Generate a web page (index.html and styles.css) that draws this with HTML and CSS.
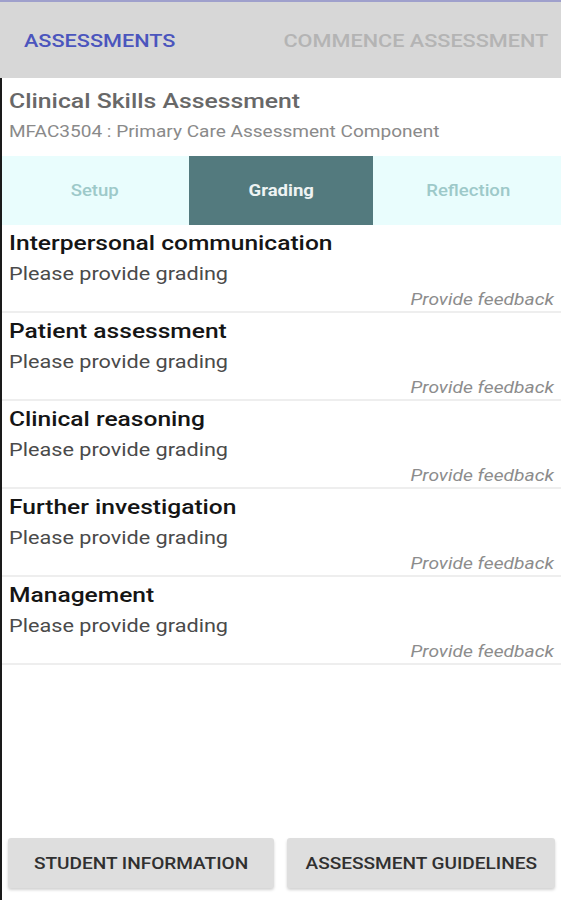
FILE: index.html
```html
<!DOCTYPE html>
<html lang="en">
<head>
    <meta charset="UTF-8">
    <meta name="viewport" content="width=device-width, initial-scale=1.0">
    <title>Clinical Skills Assessment</title>
    <link rel="stylesheet" href="styles.css">
</head>
<body>
    <div class="app">
        <header class="topbar">
            <span class="nav-link active">ASSESSMENTS</span>
            <span class="nav-link right">COMMENCE ASSESSMENT</span>
        </header>

        <main class="content">
            <div class="assessment-head">
                <h1>Clinical Skills Assessment</h1>
                <p>MFAC3504 : Primary Care Assessment Component</p>
            </div>

            <nav class="tabs">
                <div class="tab"><span>Setup</span></div>
                <div class="tab selected"><span>Grading</span></div>
                <div class="tab"><span>Reflection</span></div>
            </nav>

            <ul class="criteria">
                <li class="criterion">
                    <h2>Interpersonal communication</h2>
                    <span class="grade">Please provide grading</span>
                    <span class="feedback">Provide feedback</span>
                </li>
                <li class="criterion">
                    <h2>Patient assessment</h2>
                    <span class="grade">Please provide grading</span>
                    <span class="feedback">Provide feedback</span>
                </li>
                <li class="criterion">
                    <h2>Clinical reasoning</h2>
                    <span class="grade">Please provide grading</span>
                    <span class="feedback">Provide feedback</span>
                </li>
                <li class="criterion">
                    <h2>Further investigation</h2>
                    <span class="grade">Please provide grading</span>
                    <span class="feedback">Provide feedback</span>
                </li>
                <li class="criterion">
                    <h2>Management</h2>
                    <span class="grade">Please provide grading</span>
                    <span class="feedback">Provide feedback</span>
                </li>
            </ul>

            <footer class="actions">
                <button class="action-btn"><span>STUDENT INFORMATION</span></button>
                <button class="action-btn"><span>ASSESSMENT GUIDELINES</span></button>
            </footer>
        </main>
    </div>
</body>
</html>
```

FILE: styles.css
```css
/* General */
body {
    margin: 0;
    font-family: Roboto, "Liberation Sans", sans-serif;
    background-color: #fff;
}

.app {
    height: 100vh;
    display: flex;
    flex-direction: column;
    overflow: hidden;
}

/* The app text is a little wider than plain Roboto */
.nav-link,
.assessment-head h1,
.assessment-head p,
.tab span,
.criterion h2,
.grade,
.feedback,
.action-btn span {
    display: inline-block;
    transform: scaleX(1.16);
    transform-origin: left center;
}

/* Top bar */
.topbar {
    height: 76px;
    border-top: 2px solid #9fa0cc;
    background-color: #d7d7d7;
    display: flex;
    justify-content: space-between;
    align-items: center;
    padding: 0 13px 0 24px;
}

.nav-link {
    font-size: 19px;
    font-weight: 500;
    color: #b4b4b4;
    transform: scaleX(1.14);
}

.nav-link.right {
    transform-origin: right center;
}

.nav-link.active {
    color: #4b55bd;
}

/* Content */
.content {
    flex: 1;
    display: flex;
    flex-direction: column;
    border-left: 2px solid #1a1a1a;
}

.assessment-head {
    height: 78px;
    padding: 0 7px;
    display: flex;
    flex-direction: column;
    align-items: flex-start;
}

.assessment-head h1 {
    margin: 0;
    padding-top: 8px;
    font-size: 21px;
    line-height: 30px;
    font-weight: 500;
    color: #686868;
    transform: scaleX(1.18);
}

.assessment-head p {
    margin: 0;
    padding-top: 4px;
    font-size: 16px;
    line-height: 24px;
    color: #8a8a8a;
    transform: scaleX(1.19);
}

/* Tabs */
.tabs {
    height: 69px;
    display: grid;
    grid-template-columns: 185px 188px 1fr;
    background-color: #e9fdfd;
}

.tab {
    display: flex;
    align-items: center;
    justify-content: center;
    font-size: 16px;
    font-weight: 500;
    color: #9dc9c9;
}

.tab span {
    transform-origin: center;
}

.tab.selected {
    margin: 0 2px;
    background-color: #537a7e;
    color: #eef3f3;
    font-weight: 700;
}

/* Criteria list */
.criteria {
    list-style: none;
    margin: 0;
    padding: 0;
    flex: 1;
}

.criterion {
    display: flex;
    flex-direction: column;
    align-items: flex-start;
    padding: 4px 7px 0 7px;
    border-bottom: 2px solid #eeeeee;
}

.criterion h2 {
    margin: 0 0 4px 0;
    font-size: 21px;
    line-height: 28px;
    font-weight: 500;
    color: #151515;
    transform: scaleX(1.17);
}

.grade {
    font-size: 19px;
    line-height: 26px;
    color: #4a4a4a;
    transform: scaleX(1.14);
}

.feedback {
    align-self: flex-end;
    transform: scaleX(1.13);
    transform-origin: right center;
    font-size: 17px;
    line-height: 24px;
    font-style: italic;
    color: #8c8c8c;
}

/* Bottom buttons */
.actions {
    display: grid;
    grid-template-columns: 266px 268px;
    gap: 13px;
    padding: 0 0 12px 6px;
}

.action-btn {
    height: 50px;
    border: none;
    border-radius: 3px;
    background-color: #dedede;
    box-shadow: 0 2px 3px rgba(0, 0, 0, 0.18);
    font-family: Roboto, "Liberation Sans", sans-serif;
    font-size: 16px;
    font-weight: 500;
    color: #303030;
}

.action-btn span {
    transform: scaleX(1.19);
    transform-origin: center;
}
```
